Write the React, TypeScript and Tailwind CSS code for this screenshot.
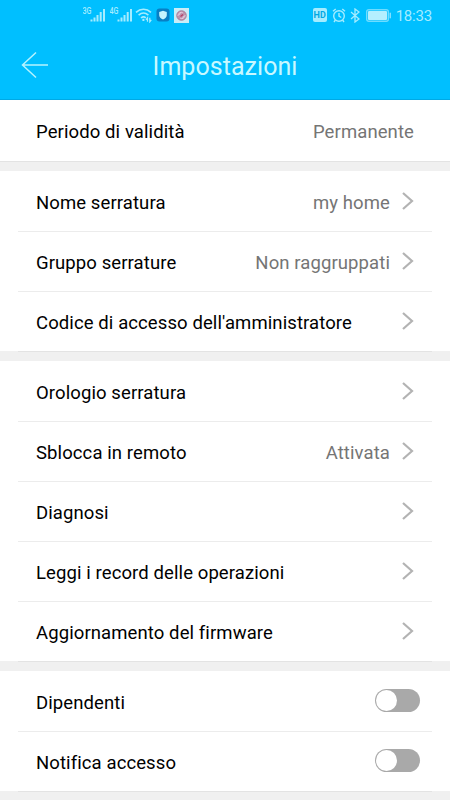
type Row = {
  label: string;
  value?: string;
  arrow?: boolean;
  toggle?: boolean;
};

const groups: Row[][] = [
  [
    { label: "Nome serratura", value: "my home", arrow: true },
    { label: "Gruppo serrature", value: "Non raggruppati", arrow: true },
    { label: "Codice di accesso dell'amministratore", arrow: true },
  ],
  [
    { label: "Orologio serratura", arrow: true },
    { label: "Sblocca in remoto", value: "Attivata", arrow: true },
    { label: "Diagnosi", arrow: true },
    { label: "Leggi i record delle operazioni", arrow: true },
    { label: "Aggiornamento del firmware", arrow: true },
  ],
  [
    { label: "Dipendenti", toggle: true },
    { label: "Notifica accesso", toggle: true },
  ],
];

function Signal({ label }: { label: string }) {
  return (
    <svg width="24" height="16" viewBox="0 0 24 16" fill="#a5ecff">
      <text x="-.5" y="7" fontSize="8.5" fontWeight="500" letterSpacing="0" fontFamily="Roboto, sans-serif" textLength="9" lengthAdjust="spacingAndGlyphs">
        {label}
      </text>
      <rect x="7.5" y="12.5" width="2" height="2" />
      <rect x="10.5" y="10.5" width="2" height="4" />
      <rect x="13.5" y="8" width="2" height="6.5" />
      <rect x="16.7" y="5" width="2" height="9.5" />
      <rect x="20" y="2" width="2" height="12.5" />
    </svg>
  );
}

function StatusBar() {
  return (
    <div className="flex h-[30px] items-center justify-between pl-[83px] pr-[18px]">
      <div className="flex items-center">
        <Signal label="3G" />
        <span className="w-[3px]" />
        <Signal label="4G" />
        <svg className="ml-[1px]" width="18" height="16" viewBox="0 0 18 16" fill="none" stroke="#a5ecff" strokeWidth="1.6">
          <path d="M1 5.3C5.5 1.2 11.5 1.2 16 5.3" />
          <path d="M3.6 8.2c3-2.7 6.8-2.7 9.8 0" />
          <path d="M6 11c1.6-1.4 3.4-1.4 4.8-.2" />
          <path d="M8.4 11.8v2.2" strokeWidth="2" />
          <path d="m11 12.8 1.500-2v4M14.800 10.800v4l1.500-2" strokeWidth="1.2" />
        </svg>
        <svg className="ml-[3px]" width="14" height="14" viewBox="0 0 14 14">
          <rect x=".5" y=".5" width="13" height="13" rx="3" fill="#087fc4" />
          <path d="M7 2.7 10.8 4v3c0 2.2-1.6 3.6-3.8 4.6-2.2-1-3.8-2.4-3.8-4.6V4z" fill="#c5f4ff" />
        </svg>
        <svg className="ml-[4px]" width="15" height="15" viewBox="0 0 15 15" fill="none">
          <rect width="15" height="15" fill="#c9edf7" />
          <circle cx="7.5" cy="7.5" r="4.8" fill="#bd93ae" stroke="#a27391" strokeWidth=".8" />
          <path d="M4 8c0-3 3-4.5 5-3M11 7c0 3-3 4.5-5 3M7 4 5 7M8 11l2-3" stroke="#e6cfe0" strokeWidth=".9" />
          <path d="M6.5 8.5 9 6.5" stroke="#b73b62" strokeWidth="1.2" />
        </svg>
      </div>

      <div className="flex items-center text-[#a5ecff]">
        <span className="flex h-[14px] w-[14px] items-center justify-center rounded-[2px] bg-[#a5ecff] pt-px text-[9px] font-bold leading-none tracking-normal text-[#00a8e4]">
          HD
        </span>
        <svg className="ml-[5px]" width="14" height="15" viewBox="0 0 14 15" fill="none" stroke="currentColor" strokeWidth="1.4">
          <circle cx="7" cy="8" r="5.3" />
          <path d="M1 3.3 3.7 1M13 3.3 10.3 1M7 5v3.2l2.3 1.3M3.4 12l-1.4 2M10.6 12l1.4 2" />
        </svg>
        <svg className="ml-[4px]" width="10" height="15" viewBox="0 0 10 15" fill="none" stroke="currentColor" strokeWidth="1.3">
          <path d="m1 4 8 7-4 3V1l4 3-8 7" />
        </svg>
        <svg className="ml-[6px]" width="26" height="13" viewBox="0 0 26 13" fill="none">
          <rect x=".7" y=".7" width="21.6" height="11.6" rx="2" stroke="#6edcff" strokeWidth="1.4" />
          <rect x="2" y="2" width="19" height="9" rx="1" fill="#b4efff" />
          <rect x="23.5" y="3.7" width="1.5" height="5.6" fill="#80dfff" />
        </svg>
        <span className="ml-[4px] mt-[2px] text-[15px] leading-none tracking-[-0.2px]">18:33</span>
      </div>
    </div>
  );
}

function Toggle() {
  return (
    <span className="-mt-[6px] mr-[2px] flex h-[23px] w-[45px] items-center rounded-full bg-[#a9a9a9] p-px">
      <span className="h-[21px] w-[21px] rounded-full bg-white" />
    </span>
  );
}

function SettingRow({ label, value, arrow, toggle }: Row) {
  return (
    <div className="mx-[18px] flex h-[60px] items-center border-t border-[#ececec] pl-[18px] pr-[10px] pt-[4px] first:border-transparent">
      <span className="text-black">{label}</span>
      <span className="ml-auto text-[#757575]">{value}</span>
      {arrow && (
        <svg className="-mt-[5px] ml-[11px] mr-[8px]" width="13" height="18" viewBox="0 0 13 18" fill="none" stroke="#b3b3b3" strokeWidth="2.2">
          <path d="m2 1 9 8-9 8" />
        </svg>
      )}
      {toggle && <Toggle />}
    </div>
  );
}

const Divider = () => (
  <div className="h-[10px] bg-[#f0f0f0] px-[18px]">
    <div className="h-px bg-[#e3e3e3]" />
  </div>
);

export default function App() {
  return (
    <div className="h-[800px] w-[450px] overflow-hidden bg-white font-[Roboto,sans-serif] text-[18.5px] tracking-[0.1px]">
      <header className="h-[100px] border-b border-[#00a9e5] bg-[#00bfff]">
        <StatusBar />
        <div className="relative flex h-[70px] items-center justify-center">
          <svg className="absolute left-[21px] top-[21px]" width="28" height="28" viewBox="0 0 28 28" fill="none" stroke="#b5f3ff" strokeWidth="1.5">
            <path d="M27 14H1.5M15 1.5 1.5 14 15 26.5" />
          </svg>
          <h1 className="pt-[4px] text-[25px] tracking-[0.05px] text-[#c8f8ff]">Impostazioni</h1>
        </div>
      </header>

      <div className="flex h-[61px] items-center justify-between px-9 pt-[4px]">
        <span className="text-black">Periodo di validità</span>
        <span className="text-[#757575]">Permanente</span>
      </div>
      <div className="h-[10px] border-t border-[#e3e3e3] bg-[#f0f0f0]" />

      {groups.map((rows, i) => (
        <section key={i}>
          {rows.map((row) => (
            <SettingRow key={row.label} {...row} />
          ))}
          <Divider />
        </section>
      ))}
    </div>
  );
}
